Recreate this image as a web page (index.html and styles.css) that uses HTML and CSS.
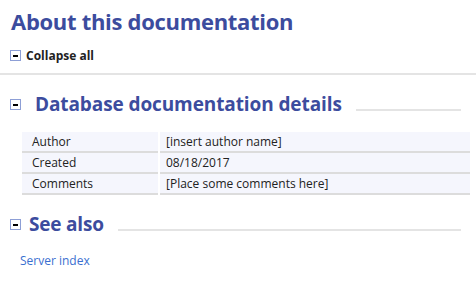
FILE: index.html
```html
<!DOCTYPE html>
<html lang="en">
<head>
  <meta charset="UTF-8" />
  <title>About this documentation</title>
  <link rel="stylesheet" href="styles.css">
</head>
<body>
  <h1 class="page-title">About this documentation</h1>
  <div class="collapse-all">
    <span class="toggle"></span>
    <span>Collapse all</span>
  </div>

  <section class="block">
    <div class="block-head">
      <span class="toggle"></span>
      <h2 class="block-title indent">Database documentation details</h2>
      <span class="rule"></span>
    </div>
    <table class="details">
      <tr>
        <td class="key">Author</td>
        <td>[insert author name]</td>
      </tr>
      <tr>
        <td class="key">Created</td>
        <td>08/18/2017</td>
      </tr>
      <tr>
        <td class="key">Comments</td>
        <td>[Place some comments here]</td>
      </tr>
    </table>
  </section>

  <section class="block">
    <div class="block-head">
      <span class="toggle"></span>
      <h2 class="block-title">See also</h2>
      <span class="rule"></span>
    </div>
    <a class="link" href="#">Server index</a>
  </section>
</body>
</html>
```

FILE: styles.css
```css
body {
  margin: 0;
  padding: 0;
  font-family: "Open Sans", "Noto Sans", sans-serif;
  font-size: 12px;
  color: #333;
  background: #fff;
}
.page-title {
  margin: 0;
  padding: 6px 0 0 11px;
  font-size: 22px;
  line-height: 30px;
  color: #3c4c9e;
  letter-spacing: -0.3px;
}
.collapse-all {
  display: flex;
  align-items: center;
  gap: 5px;
  padding: 11px 0 10px 10px;
  height: 16px;
  font-weight: bold;
  font-size: 12px;
  color: #222;
  border-bottom: 2px solid #e4e4e4;
}
.toggle {
  box-sizing: border-box;
  width: 11px;
  height: 11px;
  border: 1px solid #8d9fd6;
  background: #fff;
  position: relative;
  flex: none;
}
.toggle::after {
  content: "";
  position: absolute;
  left: 2px;
  top: 4px;
  width: 5px;
  height: 2px;
  background: #000;
}
.block {
  padding: 0 6px 0 10px;
}
.block-head {
  display: flex;
  align-items: center;
  margin-top: 17px;
  height: 24px;
}
.block-title {
  margin: 0 0 0 8px;
  font-size: 19px;
  line-height: 24px;
  color: #3c4c9e;
  letter-spacing: -0.2px;
}
.block-title.indent {
  margin-left: 14px;
  letter-spacing: -0.1px;
}
.rule {
  flex: 1;
  height: 2px;
  background: #e4e4e4;
  margin: 11px 9px 0 14px;
}
.details {
  margin: 16px 0 0 10px;
  width: calc(100% - 8px);
  border-collapse: separate;
  border-spacing: 2px 0;
}
.details td {
  background: #f5f6fd;
  border-bottom: 2px solid #dcdcdc;
  padding: 0 6px;
  height: 19px;
  line-height: 19px;
  color: #222;
}
.details td.key {
  width: 120px;
  padding-left: 10px;
}
.link {
  display: inline-block;
  margin: 16px 0 0 10px;
  color: #3a6fd0;
  text-decoration: none;
}
```
